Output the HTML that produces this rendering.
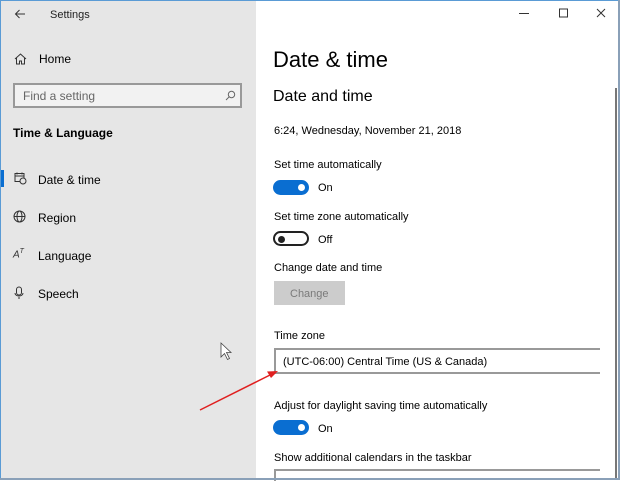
<!DOCTYPE html>
<html><head><meta charset="utf-8"><style>
*{margin:0;padding:0;box-sizing:border-box}
body{width:620px;height:480px;overflow:hidden;font-family:"Liberation Sans",sans-serif;color:#000;background:#fff;position:relative}
.side{position:absolute;left:0;top:0;width:256px;height:480px;background:#e6e6e6}
.t{position:absolute;white-space:nowrap}
.s11{font-size:11px}
.s12{font-size:12px}
.tog{position:absolute;width:36px;height:15px;border-radius:8px}
.on{background:#0a6ed1}
.on::after{content:"";position:absolute;right:4px;top:4px;width:7px;height:7px;border-radius:50%;background:#fff}
.off{border:2px solid #222;background:#fff}
.off::after{content:"";position:absolute;left:3px;top:2.5px;width:7px;height:7px;border-radius:50%;background:#222}
.b{position:absolute;z-index:5}
</style></head><body>
<div class="side"></div>

<svg style="position:absolute;left:14px;top:8px" width="12" height="12" viewBox="0 0 12 12"><path d="M11 6H1.5M5.5 2L1.5 6l4 4" stroke="#333" stroke-width="1" fill="none"/></svg>
<div class="t s11" style="left:50px;top:9px;color:#222">Settings</div>

<svg style="position:absolute;left:14px;top:53px" width="13" height="12" viewBox="0 0 13 12"><path d="M1 6L6.5 1 12 6M2.5 5v6h3V8h2v3h3V5" stroke="#333" fill="none"/></svg>
<div class="t s12" style="left:39px;top:52px">Home</div>

<div style="position:absolute;left:13px;top:83px;width:229px;height:25px;border:2px solid #999;background:#f2f2f2"></div>
<div class="t s12" style="left:23px;top:89px;color:#666">Find a setting</div>
<svg style="position:absolute;left:225px;top:90px" width="11" height="11" viewBox="0 0 11 11"><circle cx="6.5" cy="4.5" r="3.2" stroke="#666" fill="none"/><path d="M4.2 6.8L1 10" stroke="#666"/></svg>

<div class="t s12" style="left:13px;top:126px;font-weight:bold">Time &amp; Language</div>

<div style="position:absolute;left:1px;top:170px;width:3px;height:17px;background:#0a6ed1"></div>
<svg style="position:absolute;left:14px;top:172px" width="13" height="13" viewBox="0 0 13 13"><rect x="1" y="1.5" width="9" height="8" stroke="#333" fill="none"/><path d="M1 4h9M3 0.5v2M8 0.5v2" stroke="#333"/><circle cx="9" cy="9" r="3" fill="#e6e6e6" stroke="#333"/></svg>
<div class="t s12" style="left:38px;top:173px">Date &amp; time</div>

<svg style="position:absolute;left:13px;top:210px" width="13" height="13" viewBox="0 0 13 13"><circle cx="6.5" cy="6.5" r="5.5" stroke="#333" fill="none"/><ellipse cx="6.5" cy="6.5" rx="2.5" ry="5.5" stroke="#333" fill="none"/><path d="M1 6.5h11" stroke="#333"/></svg>
<div class="t s12" style="left:38px;top:211px">Region</div>

<div class="t" style="left:13px;top:248px;font-size:10px;color:#333;font-style:italic">A<sup style="font-size:7px">T</sup></div>
<div class="t s12" style="left:38px;top:249px">Language</div>

<svg style="position:absolute;left:14px;top:286px" width="10" height="14" viewBox="0 0 10 14"><rect x="2.5" y="1" width="5" height="8" rx="2.5" stroke="#333" fill="none"/><path d="M1 7c0 4 8 4 8 0M5 11v2" stroke="#333" fill="none"/></svg>
<div class="t s12" style="left:38px;top:287px">Speech</div>

<svg style="position:absolute;left:519px;top:8px" width="90" height="11" viewBox="0 0 90 11"><path d="M0 5.5h10" stroke="#333"/><rect x="40.5" y="1" width="8" height="8" stroke="#333" fill="none"/><path d="M78 1l8 8M86 1l-8 8" stroke="#333"/></svg>

<div style="position:absolute;left:615px;top:88px;width:2px;height:392px;background:#777"></div>

<div class="t" style="left:273px;top:47px;font-size:22px;font-weight:300">Date &amp; time</div>
<div class="t" style="left:273px;top:88px;font-size:16px">Date and time</div>
<div class="t s11" style="left:274px;top:125px">6:24, Wednesday, November 21, 2018</div>

<div class="t s11" style="left:274px;top:159px">Set time automatically</div>
<div class="tog on" style="left:273px;top:180px"></div>
<div class="t s11" style="left:318px;top:182px">On</div>

<div class="t s11" style="left:274px;top:211px">Set time zone automatically</div>
<div class="tog off" style="left:273px;top:231px"></div>
<div class="t s11" style="left:318px;top:234px">Off</div>

<div class="t s11" style="left:274px;top:262px">Change date and time</div>
<div style="position:absolute;left:274px;top:281px;width:71px;height:24px;background:#ccc"></div>
<div class="t s11" style="left:290px;top:288px;color:#7a7a7a">Change</div>

<div class="t s11" style="left:274px;top:330px">Time zone</div>
<div style="position:absolute;left:274px;top:348px;width:326px;height:26px;border:2px solid #999;border-right:none"></div>
<div class="t s11" style="left:283px;top:356px">(UTC-06:00) Central Time (US &amp; Canada)</div>

<div class="t s11" style="left:274px;top:400px">Adjust for daylight saving time automatically</div>
<div class="tog on" style="left:273px;top:420px"></div>
<div class="t s11" style="left:318px;top:423px">On</div>

<div class="t s11" style="left:274px;top:452px">Show additional calendars in the taskbar</div>
<div style="position:absolute;left:274px;top:469px;width:326px;height:12px;border-top:2px solid #999;border-left:2px solid #999"></div>

<svg style="position:absolute;left:220px;top:342px" width="14" height="20" viewBox="0 0 14 20"><path d="M1 1v14l3.5-3.5 3 6 2-1-3-6H11z" fill="#fff" stroke="#444" stroke-width="0.8"/></svg>
<svg style="position:absolute;left:0;top:0" width="620" height="480"><path d="M200 410L272 374" stroke="#e02020" stroke-width="1.5"/><path d="M278 371L267 371.5 271 378z" fill="#e02020"/></svg>

<div class="b" style="left:0;top:0;width:620px;height:1px;background:#5a9bd5"></div>
<div class="b" style="left:0;top:0;width:1px;height:480px;background:#5a9bd5"></div>
<div class="b" style="right:0;top:0;width:2px;height:480px;background:#8aa0b8"></div>
<div class="b" style="left:0;bottom:0;width:620px;height:2px;background:#8aa0b8"></div>
</body></html>
